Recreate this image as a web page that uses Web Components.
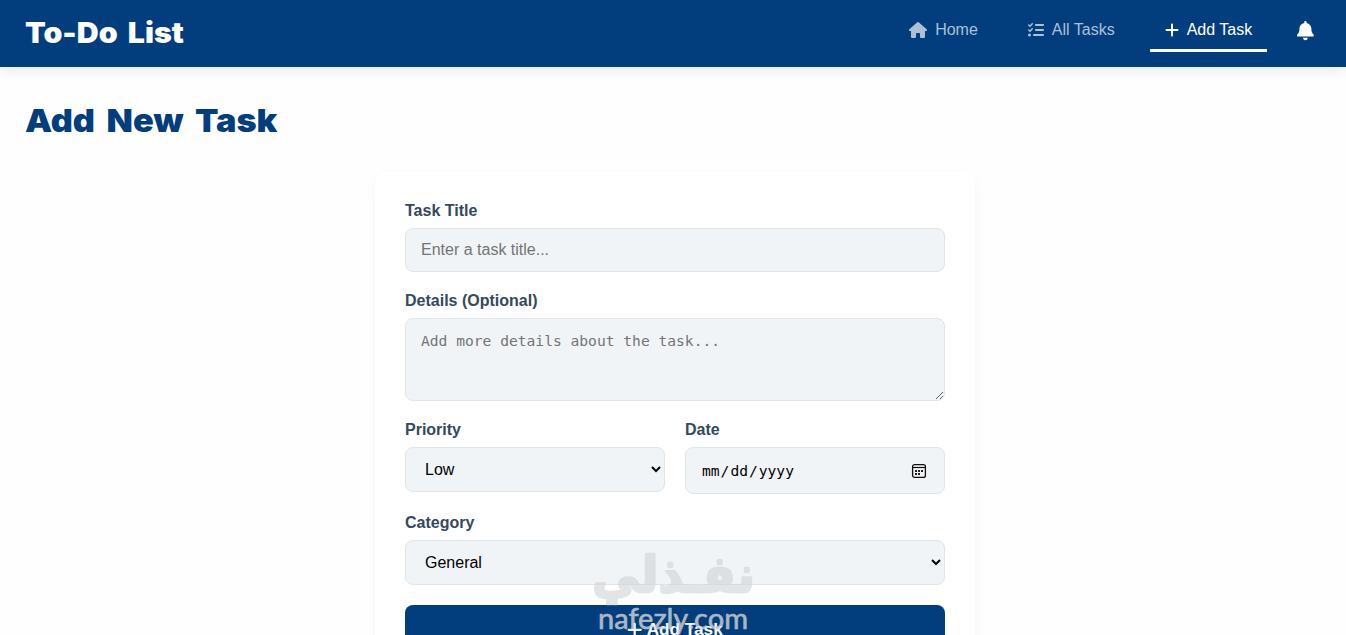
<!DOCTYPE html>
<html lang="en">
<head>
<meta charset="utf-8">
<title>To-Do List - Add Task</title>
<style>
  html, body {
    height: 100%;
    margin: 0;
    overflow: hidden;
  }
  body {
    position: relative;
    background-color: #fefefe;
    font-family: "Liberation Sans", Arial, sans-serif;
    font-size: 16px;
    --primary: #023e7d;
    --field-bg: #f0f4f7;
    --field-border: #dfe4e8;
    --label: #34495e;
  }
</style>
</head>
<body>
  <app-header heading="To-Do List">
    <nav-link icon="house">Home</nav-link>
    <nav-link icon="list">All Tasks</nav-link>
    <nav-link icon="plus" active>Add Task</nav-link>
  </app-header>

  <page-title>Add New Task</page-title>

  <task-card>
    <form-field label="Task Title">
      <text-input placeholder="Enter a task title..."></text-input>
    </form-field>
    <form-field label="Details (Optional)">
      <text-area placeholder="Add more details about the task..."></text-area>
    </form-field>
    <form-row>
      <form-field label="Priority"><select-box value="Low"></select-box></form-field>
      <form-field label="Date"><date-input></date-input></form-field>
    </form-row>
    <form-field label="Category"><select-box value="General"></select-box></form-field>
    <submit-button>Add Task</submit-button>
  </task-card>

  <water-mark></water-mark>

<script>
// viewBox and shapes of every icon
const icons = {
  house: ["0 0 576 512", "M575.8 255.5c0 18-15 32.1-32 32.1h-32l.7 160.2c0 2.7-.2 5.4-.5 8.1V472c0 22.1-17.9 40-40 40h-16c-1.1 0-2.2 0-3.3-.1-1.4.1-2.8.1-4.2.1H392c-22.1 0-40-17.9-40-40v-88c0-17.7-14.3-32-32-32h-64c-17.7 0-32 14.3-32 32v88c0 22.1-17.9 40-40 40h-55.9c-1.5 0-3-.1-4.5-.2-1.2.1-2.4.2-3.6.2h-16c-22.1 0-40-17.9-40-40V360c0-.9 0-1.9.1-2.8v-69.600H32c-18 0-32-14-32-32.100 0-9 3-17 10-24L266.400 8c7-7 15-8 22-8s15 2 21 7l255.400 224.500c8 7 12 15 11 24z"],
  list: ["0 0 512 512", "M152.1 38.2c9.9 8.9 10.7 24 1.8 33.9l-72 80c-4.4 4.9-10.6 7.8-17.2 7.9s-12.9-2.4-17.6-7L7 113c-9.3-9.4-9.3-24.6 0-34s24.6-9.4 33.9 0l22.1 22.1 55.1-61.2c8.9-9.9 24-10.7 33.9-1.8zm0 160c9.9 8.9 10.7 24 1.8 33.9l-72 80c-4.4 4.9-10.6 7.8-17.2 7.9s-12.9-2.4-17.6-7L7 273c-9.4-9.4-9.4-24.6 0-33.9s24.6-9.4 33.9 0l22.1 22.1 55.1-61.2c8.9-9.9 24-10.7 33.9-1.8zM224 96c0-17.7 14.3-32 32-32h224c17.7 0 32 14.3 32 32s-14.3 32-32 32H256c-17.7 0-32-14.3-32-32zm0 160c0-17.7 14.3-32 32-32h224c17.7 0 32 14.3 32 32s-14.3 32-32 32H256c-17.7 0-32-14.3-32-32zm-64 160c0-17.7 14.3-32 32-32h288c17.7 0 32 14.3 32 32s-14.3 32-32 32H192c-17.7 0-32-14.3-32-32zM48 368a48 48 0 1 1 0 96 48 48 0 1 1 0-96z"],
  plus: ["0 0 448 512", "M256 80c0-17.7-14.3-32-32-32s-32 14.3-32 32v144H48c-17.7 0-32 14.3-32 32s14.3 32 32 32h144v144c0 17.7 14.3 32 32 32s32-14.3 32-32V288h144c17.7 0 32-14.3 32-32s-14.3-32-32-32H256V80z"],
  bell: ["0 0 448 512", "M224 0c-17.7 0-32 14.3-32 32v19.2C119 66 64 130.6 64 208v18.8c0 47-17.3 92.4-48.5 127.6l-7.4 8.3c-8.4 9.4-10.4 22.9-5.3 34.4S19.4 416 32 416h384c12.6 0 24-7.4 29.2-18.9s3.1-25-5.3-34.4l-7.4-8.3C401.3 319.2 384 273.9 384 226.8V208c0-77.4-55-142-128-156.8V32c0-17.7-14.3-32-32-32zm45.3 493.3c12-12 18.7-28.3 18.7-45.3H160c0 17 6.7 33.3 18.7 45.3S207 512 224 512s33.3-6.7 45.3-18.7z"],
};

function icon(name, size = 16) {
  const [box, path] = icons[name];
  const width = (box.split(" ")[2] / 512) * size;
  return `<svg viewBox="${box}" width="${width}" height="${size}" fill="currentColor"><path d="${path}"/></svg>`;
}

class AppHeader extends HTMLElement {
  connectedCallback() {
    this.attachShadow({ mode: "open" }).innerHTML = `
      <style>
        :host {
          display: flex;
          align-items: center;
          justify-content: space-between;
          box-sizing: border-box;
          height: 67px;
          padding: 0 32px 0 25px;
          background-color: var(--primary);
          color: white;
          box-shadow: 0 4px 12px rgba(0, 0, 0, 0.08);
        }
        .brand {
          font: 900 28.8px/40px "Arial Black", Inter, sans-serif;
          white-space: nowrap;
          word-spacing: 4px;
          padding-bottom: 2px;
          transform: scaleX(1.052);
          transform-origin: left;
        }
        nav {
          display: flex;
          align-items: center;
          gap: 20px;
          padding-bottom: 4px;
        }
        .bell {
          display: flex;
          margin-left: 10px;
          padding-bottom: 1px;
        }
      </style>
      <div class="brand">${this.getAttribute("heading")}</div>
      <nav><slot></slot><span class="bell">${icon("bell", 19.2)}</span></nav>
    `;
  }
}

class NavLink extends HTMLElement {
  connectedCallback() {
    this.attachShadow({ mode: "open" }).innerHTML = `
      <style>
        :host {
          display: flex;
          align-items: center;
          gap: 8px;
          padding: 9px 15px 10px;
          line-height: 18px;
          color: #adc0d6;
          border-bottom: 3px solid transparent;
          white-space: nowrap;
        }
        :host([active]) {
          color: white;
          border-bottom-color: white;
        }
        svg { margin-top: 1px; }
      </style>
      ${icon(this.getAttribute("icon"))}<span><slot></slot></span>
    `;
  }
}

class PageTitle extends HTMLElement {
  connectedCallback() {
    this.attachShadow({ mode: "open" }).innerHTML = `
      <style>
        :host { display: flex; padding: 31px 25px 28px; }
        h1 {
          margin: 0;
          color: var(--primary);
          font: 900 32px/46px "Arial Black", Inter, sans-serif;
          word-spacing: 4.5px;
          transform: scaleX(1.07);
          transform-origin: left;
        }
      </style>
      <h1><slot></slot></h1>
    `;
  }
}

class TaskCard extends HTMLElement {
  connectedCallback() {
    this.attachShadow({ mode: "open" }).innerHTML = `
      <style>
        :host {
          display: flex;
          flex-direction: column;
          gap: 20px;
          box-sizing: border-box;
          width: 600px;
          margin: 0 auto;
          padding: 30px;
          position: relative;
          left: 2px;
          border-radius: 12px;
          background-color: white;
          box-shadow: 0 4px 12px rgba(0, 0, 0, 0.04);
        }
      </style>
      <slot></slot>
    `;
  }
}

class FormRow extends HTMLElement {
  connectedCallback() {
    this.attachShadow({ mode: "open" }).innerHTML = `
      <style>
        :host { display: flex; gap: 20px; }
        ::slotted(*) { flex: 1; }
      </style>
      <slot></slot>
    `;
  }
}

class FormField extends HTMLElement {
  connectedCallback() {
    this.attachShadow({ mode: "open" }).innerHTML = `
      <style>
        :host { display: flex; flex-direction: column; gap: 8px; }
        label {
          color: var(--label);
          font-weight: bold;
          line-height: 18px;
        }
      </style>
      <label>${this.getAttribute("label")}</label>
      <slot></slot>
    `;
  }
}

// shared box of all the controls
const controlStyle = `
  :host { display: block; }
  input, textarea, select {
    display: block;
    box-sizing: border-box;
    width: 100%;
    margin: 0;
    padding: 12px 15px;
    border: 1px solid var(--field-border);
    border-radius: 8px;
    background-color: var(--field-bg);
    color: black;
    font: 16px "Liberation Sans", Arial, sans-serif;
  }
  ::placeholder { color: #757575; }
`;

class TextInput extends HTMLElement {
  connectedCallback() {
    this.attachShadow({ mode: "open" }).innerHTML = `
      <style>${controlStyle} input { height: 44px; }</style>
      <input type="text" placeholder="${this.getAttribute("placeholder")}">
    `;
  }
}

class TextArea extends HTMLElement {
  connectedCallback() {
    this.attachShadow({ mode: "open" }).innerHTML = `
      <style>
        ${controlStyle}
        textarea {
          height: 83px;
          resize: vertical;
          font: 14.62px/20px Consolas, "DejaVu Sans Mono", monospace;
        }
      </style>
      <textarea placeholder="${this.getAttribute("placeholder")}"></textarea>
    `;
  }
}

class SelectBox extends HTMLElement {
  connectedCallback() {
    this.attachShadow({ mode: "open" }).innerHTML = `
      <style>${controlStyle} select { height: 45px; }</style>
      <select><option>${this.getAttribute("value")}</option></select>
    `;
  }
}

class DateInput extends HTMLElement {
  connectedCallback() {
    this.attachShadow({ mode: "open" }).innerHTML = `
      <style>
        ${controlStyle}
        :host { position: relative; }
        input {
          height: 47px;
          font: 14.62px Consolas, "DejaVu Sans Mono", monospace;
        }
        /* still clickable, the svg is drawn in its place */
        ::-webkit-calendar-picker-indicator { opacity: 0; }
        svg {
          position: absolute;
          right: 18px;
          top: 16px;
          pointer-events: none;
        }
      </style>
      <input type="date">
      <svg width="16" height="16" viewBox="0 0 16 16">
        <rect x="1.6" y="1.6" width="12.8" height="12.8" rx="2" fill="none" stroke="#111" stroke-width="1.3"/>
        <path d="M1.5 4.5h13" stroke="#111" stroke-width="1.2"/>
        <path d="M4 7h2v2H4zM7 7h2v2H7zM10 7h2v2h-2zM4 10h2v2H4zM7 10h2v2H7z" fill="#222"/>
      </svg>
    `;
  }
}

class SubmitButton extends HTMLElement {
  connectedCallback() {
    this.attachShadow({ mode: "open" }).innerHTML = `
      <style>
        :host { display: block; }
        button {
          display: flex;
          align-items: center;
          justify-content: center;
          gap: 4px;
          width: 100%;
          height: 49px;
          padding: 0;
          border: 0;
          border-radius: 8px;
          background-color: var(--primary);
          color: white;
          font: bold 17.2px "Liberation Sans", Arial, sans-serif;
        }
      </style>
      <button>${icon("plus", 17.6)}<span><slot></slot></span></button>
    `;
  }
}

class WaterMark extends HTMLElement {
  connectedCallback() {
    this.attachShadow({ mode: "open" }).innerHTML = `
      <style>
        :host {
          position: absolute;
          left: 590px;
          top: 545px;
          width: 170px;
          height: 90px;
          overflow: hidden;
          pointer-events: none;
        }
        svg { display: block; }
      </style>
      <svg width="170" height="90" fill="#d4d6d8" stroke="#d4d6d8" stroke-linejoin="round">
        <text x="2" y="47" textLength="163" lengthAdjust="spacingAndGlyphs" direction="rtl" text-anchor="end"
          font-family="DejaVu Sans" font-weight="bold" font-size="50" stroke-width="2.5" opacity="0.65">نفـذلي</text>
        <text x="8" y="84" textLength="150" lengthAdjust="spacingAndGlyphs"
          font-family="Lato" font-size="28" stroke-width="0.6" opacity="0.8">nafezly.com</text>
      </svg>
    `;
  }
}

customElements.define("app-header", AppHeader);
customElements.define("nav-link", NavLink);
customElements.define("page-title", PageTitle);
customElements.define("task-card", TaskCard);
customElements.define("form-row", FormRow);
customElements.define("form-field", FormField);
customElements.define("text-input", TextInput);
customElements.define("text-area", TextArea);
customElements.define("select-box", SelectBox);
customElements.define("date-input", DateInput);
customElements.define("submit-button", SubmitButton);
customElements.define("water-mark", WaterMark);
</script>
</body>
</html>
